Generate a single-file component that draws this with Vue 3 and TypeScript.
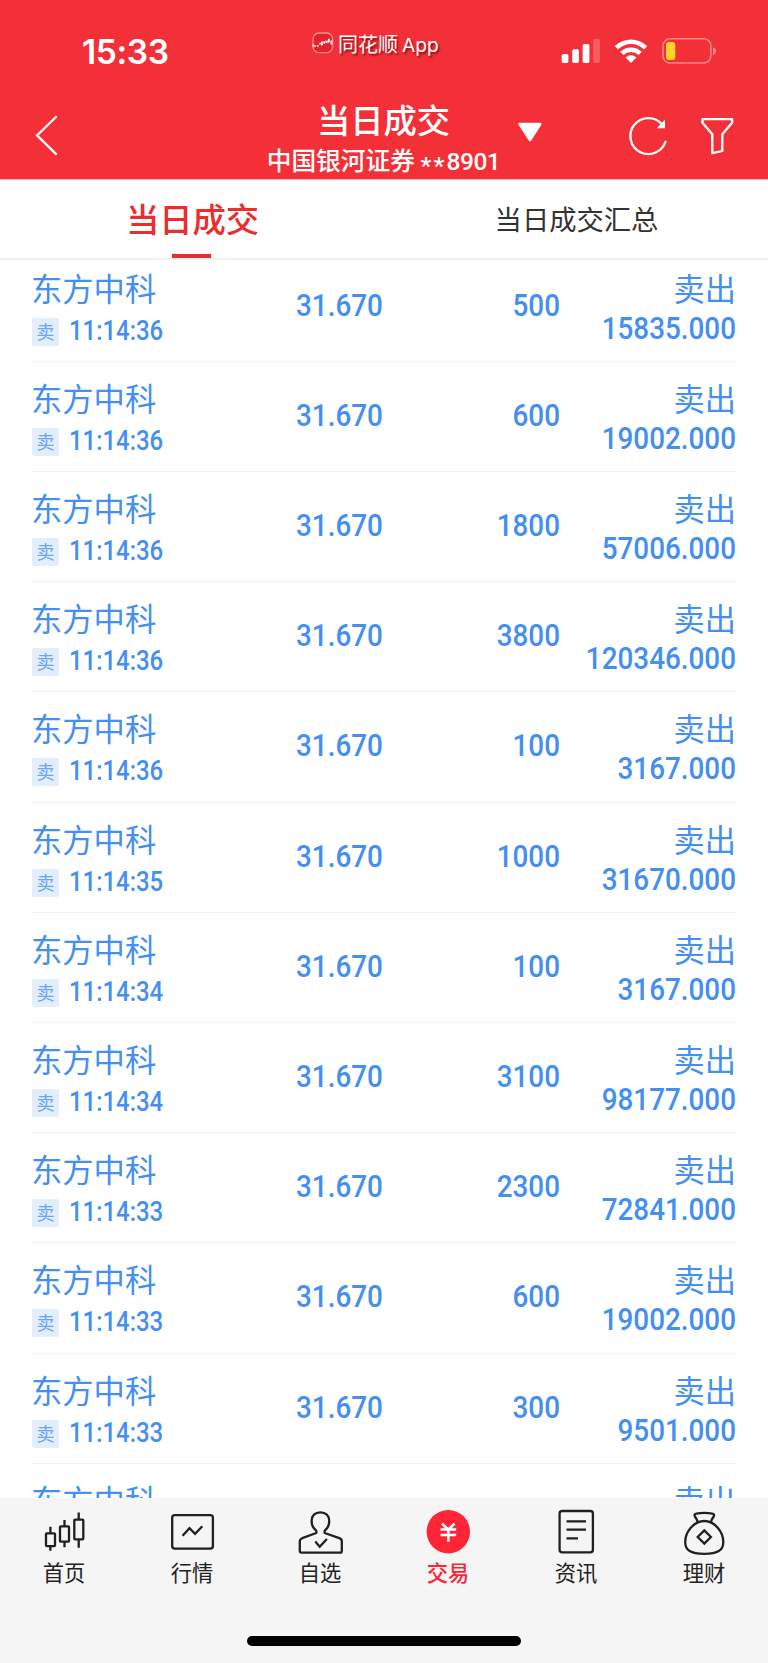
<script setup lang="ts">
interface Trade {
  time: string
  qty: string
  amount: string
}

const trades: Trade[] = [
  { time: '11:14:36', qty: '500', amount: '15835.000' },
  { time: '11:14:36', qty: '600', amount: '19002.000' },
  { time: '11:14:36', qty: '1800', amount: '57006.000' },
  { time: '11:14:36', qty: '3800', amount: '120346.000' },
  { time: '11:14:36', qty: '100', amount: '3167.000' },
  { time: '11:14:35', qty: '1000', amount: '31670.000' },
  { time: '11:14:34', qty: '100', amount: '3167.000' },
  { time: '11:14:34', qty: '3100', amount: '98177.000' },
  { time: '11:14:33', qty: '2300', amount: '72841.000' },
  { time: '11:14:33', qty: '600', amount: '19002.000' },
  { time: '11:14:33', qty: '300', amount: '9501.000' },
]
</script>

<template>
  <div class="screen">
    <header class="header">
      <div class="status">
        <span class="clock">15:33</span>
        <span class="brand">
          <svg width="22" height="22" viewBox="0 0 22 22">
            <rect x="1" y="1" width="19.6" height="19.6" rx="6" fill="#e3222b" stroke="#f98f92" stroke-width="1.3" />
            <path d="M1.3 12.200v2.200M2 14h1.800M5 14.300l1.500-.8M7.400 11.200l1.400.8M10 9.500v4M12.400 11.800V9M14.700 11V8.600M16.800 6.800v3.600M19.400 8.500v4" stroke="#fff" stroke-width="1.700" fill="none" />
          </svg>
          <span class="brand-text">同花顺<span class="brand-app">App</span></span>
        </span>
        <svg class="status-icons" width="160" height="30" viewBox="558 36 160 30">
          <g fill="#fff">
            <rect x="561.7" y="54" width="6.7" height="9" rx="1.8" />
            <rect x="572.2" y="49.3" width="6.7" height="13.7" rx="1.8" />
            <rect x="582.7" y="44" width="6.7" height="19" rx="1.8" />
            <rect x="593.2" y="39" width="6.7" height="24" rx="1.8" opacity=".22" />
            <path d="M614.8 46.1a23.4 23.4 0 0 1 32.4 0l-3.1 3.3a18.8 18.8 0 0 0-26.2 0z" />
            <path d="M620.2 51.8a15.6 15.6 0 0 1 21.6 0l-3.2 3.3a11 11 0 0 0-15.2 0z" />
            <path d="M625.6 57.4a7.8 7.8 0 0 1 10.800 0L631 63z" />
          </g>
          <rect x="663" y="38.8" width="47.8" height="24.2" rx="7" fill="none" stroke="#f88589" stroke-width="1.6" />
          <rect x="666" y="42" width="9.3" height="18" rx="3" fill="#ffd426" />
          <path d="M713 47.3c4 1.8 4 6 0 7.8z" fill="#f88589" />
        </svg>
      </div>
      <div class="nav">
        <svg class="back" width="24" height="42" viewBox="35 114 24 42">
          <path d="M56.7 116.3 37 135.4l19.700 19.200" fill="none" stroke="#fff" stroke-width="2.200" />
        </svg>
        <div class="titles">
          <h1>当日成交</h1>
          <p>中国银河证券 <span class="account"><span class="stars">**</span>8901</span></p>
        </div>
        <svg class="caret" width="26" height="22" viewBox="517 121 26 22">
          <path d="M519.500 124h20.800L530 140z" fill="#fff" stroke="#fff" stroke-width="2.600" stroke-linejoin="round" />
        </svg>
        <svg class="tools" width="108" height="42" viewBox="628 115 108 42">
          <g fill="none" stroke="#fff" stroke-width="2.300">
            <path d="M665.700 141a18 18 0 1 1-4.100-17.200" />
            <path d="M664.300 121.200v6.300h-5.900z" fill="#fff" stroke-width="1.400" />
            <path d="M702.500 119.200h29.600v3.600l-9.800 11.400v16.800l-10 2.200v-19l-9.800-11.400z" stroke-linejoin="round" />
          </g>
        </svg>
      </div>
    </header>

    <nav class="tabs">
      <div class="tab active"><span>当日成交</span></div>
      <div class="tab"><span>当日成交汇总</span></div>
    </nav>

    <main class="list">
      <div class="rows">
        <article v-for="(t, i) in trades" :key="i" class="row">
          <div class="stock">
            <span class="cn">东方中科</span>
            <div class="meta"><i class="tag">卖</i><span class="num time">{{ t.time }}</span></div>
          </div>
          <span class="num price">31.670</span>
          <span class="num qty">{{ t.qty }}</span>
          <div class="deal">
            <span class="cn">卖出</span>
            <span class="num amount">{{ t.amount }}</span>
          </div>
        </article>
        <article class="row partial">
          <div class="stock"><span class="cn">东方中科</span></div>
          <span></span>
          <span></span>
          <div class="deal"><span class="cn">卖出</span></div>
        </article>
      </div>
    </main>

    <footer class="footer">
      <div class="item">
        <svg viewBox="0 0 48 48">
          <rect x="6" y="25.400" width="9" height="12.700" rx=".8" /><path d="M10.400 18.700v6.700M10.400 38.100v4.700" />
          <rect x="20" y="18.400" width="9" height="15.300" rx=".8" /><path d="M24.500 12v6.400M24.500 33.700v5.500" />
          <rect x="34.300" y="11.700" width="9" height="19.700" rx=".8" /><path d="M38.700 4.600v7M38.700 31.400v8.400" />
        </svg>
        <span>首页</span>
      </div>
      <div class="item">
        <svg viewBox="0 0 48 48">
          <rect x="4.200" y="7.200" width="40.700" height="33.500" rx="2.600" />
          <path d="M14.600 27.700l6.900-7.500 5.600 5.600 7.200-7.600" />
        </svg>
        <span>行情</span>
      </div>
      <div class="item">
        <svg viewBox="0 0 48 48">
          <path d="M20.300 25v-2.400C16.800 20.200 15.600 17 15.600 13c0-5.400 3.400-8.700 8.800-8.700s8.800 3.300 8.800 8.700c0 4-1.200 7.200-4.500 9.600V25l14.600 5.200c1.700.6 2.500 1.300 2.500 3v9.700c0 1.100-.6 1.700-1.700 1.700H5.500c-1.100 0-1.700-.6-1.700-1.700v-9.700c0-1.700.7-2.300 2.400-3z" stroke-linejoin="round" />
          <path d="M19.300 33.600l4.400 5.200 7.200-7.800" />
        </svg>
        <span>自选</span>
      </div>
      <div class="item on">
        <svg viewBox="0 0 48 48">
          <circle cx="24.300" cy="23.700" r="21.700" class="disc" />
          <path d="M18 15.600l6.300 6.200 6.300-6.200M16.500 21.500h15.700M16.500 27h15.700M24.300 21.500v12.200" class="yen" />
        </svg>
        <span>交易</span>
      </div>
      <div class="item">
        <svg viewBox="0 0 48 48">
          <rect x="7.600" y="3" width="33.300" height="41.300" rx="2.600" />
          <path d="M14.500 13.300H34M14.500 21.700H34M14.500 30.300H26" />
        </svg>
        <span>资讯</span>
      </div>
      <div class="item">
        <svg viewBox="0 0 48 48">
          <path d="M17.700 14c-.6-2.300-1.500-3.700-2.800-5.500-.9-1.400-.3-2.700 1.300-2.900 5.400-.9 10.800-.9 16.200 0 1.600.2 2.200 1.500 1.300 2.900-1.300 1.800-2.200 3.200-2.800 5.500" />
          <path d="M24.300 13c10.500 0 19 11 19 21 0 8.500-5.400 11.800-19 11.800S5.200 42.500 5.200 34c0-10 8.500-21 19.100-21z" />
          <path d="M24.300 22.400l6.600 6.600-6.600 6.600-6.600-6.600z" />
        </svg>
        <span>理财</span>
      </div>
      <div class="home-bar"></div>
    </footer>
  </div>
</template>

<style>
body {
  margin: 0;
}
</style>

<style scoped>
.screen {
  width: 768px;
  height: 1663px;
  display: flex;
  flex-direction: column;
  overflow: hidden;
  background: #fff;
  font-family: "Noto Sans CJK SC", sans-serif;
}
.header {
  height: 180px;
  flex: none;
  background: #f33038;
  color: #fff;
  border-bottom: 1px solid #f9b4b6;
  box-sizing: border-box;
}
.status {
  height: 98px;
  display: grid;
  grid-template-columns: 312px 246px 1fr;
  align-items: start;
}
.clock {
  margin: 32px 0 0 82px;
  font: 600 33.5px/40px Inter, sans-serif;
  letter-spacing: -0.4px;
}
.brand {
  display: flex;
  align-items: center;
  gap: 4px;
  height: 28px;
  margin-top: 30px;
}
.brand svg {
  margin-bottom: 3px;
}
.brand-text {
  font-size: 20px;
  line-height: 28px;
  text-shadow: 1.5px 1.5px 2px rgba(80, 0, 0, 0.65);
  white-space: nowrap;
}
.brand-app {
  font-family: Inter, sans-serif;
  font-size: 19.3px;
  margin-left: 4px;
}
.status-icons {
  margin-top: 36px;
}
.nav {
  height: 80px;
  display: grid;
  grid-template-columns: 35px 225px 257px 111px 1fr;
  align-items: start;
}
.back {
  grid-column: 2;
  margin-top: 16px;
}
.titles {
  text-align: center;
  white-space: nowrap;
  margin: -1px 10px 0 0;
}
h1 {
  margin: 0;
  font-size: 33.3px;
  line-height: 44px;
  font-weight: 500;
}
p {
  margin: 0;
  font-size: 24.7px;
  line-height: 36px;
  font-weight: 500;
}
.account {
  font-family: Roboto, sans-serif;
  font-size: 24.5px;
  font-weight: 500;
  letter-spacing: -0.5px;
}
.stars {
  display: inline-block;
  line-height: 20px;
  letter-spacing: 2.2px;
  transform: translateY(4px);
}
.caret {
  margin-top: 23px;
}
.tools {
  margin-top: 17px;
}
.tabs {
  height: 78px;
  flex: none;
  display: grid;
  grid-template-columns: 1fr 1fr;
  border-bottom: 2px solid #f0f0f0;
  color: #333;
}
.tab {
  display: flex;
  justify-content: center;
  font-size: 27.3px;
  line-height: 76px;
}
.tab span {
  margin-left: 1px;
}
.active {
  position: relative;
  color: #eb2d2e;
  font-size: 33.3px;
  font-weight: 500;
}
.active::after {
  content: "";
  position: absolute;
  left: 172px;
  bottom: 0;
  width: 39px;
  height: 4px;
  background: #eb2d2e;
}
.list {
  flex: 1;
  min-height: 0;
  overflow: hidden;
}
.rows {
  margin: -8.5px 32px 0;
  color: #448ff0;
}
.row {
  height: 110.23px;
  box-sizing: border-box;
  border-bottom: 1.5px solid #f3f3f3;
  display: grid;
  grid-template-columns: 264px 120px 144px 1fr;
  align-items: start;
}
.cn {
  display: block;
  font-size: 31.3px;
  line-height: 40px;
}
.stock {
  padding-top: 16px;
}
.stock .cn {
  margin-left: -1px;
}
.meta {
  display: flex;
  align-items: center;
  margin-top: 10px;
  height: 28px;
}
.tag {
  width: 27px;
  height: 28px;
  border-radius: 2px;
  background: #e2eefc;
  color: #6ba6f3;
  font-style: normal;
  font-size: 18px;
  line-height: 27px;
  text-align: center;
}
.num {
  font-family: Roboto, sans-serif;
  font-weight: 500;
  font-size: 32px;
  line-height: 40px;
  white-space: nowrap;
  transform: scaleX(0.87);
  transform-origin: left;
}
.time {
  font-size: 27.5px;
  margin: -2px 0 0 10px;
}
.price {
  margin-top: 33px;
}
.qty {
  margin-top: 33px;
  text-align: right;
  transform-origin: right;
}
.deal {
  padding-top: 16px;
  text-align: right;
}
.amount {
  display: block;
  transform-origin: right;
}
.footer {
  height: 165px;
  flex: none;
  box-sizing: border-box;
  padding-top: 10px;
  background: #f5f5f5;
  display: grid;
  grid-template-columns: repeat(6, 128px);
  grid-template-rows: 130px 10px;
  color: #222;
}
.item {
  display: flex;
  flex-direction: column;
  align-items: center;
  font-size: 21.3px;
  line-height: 32px;
}
.item svg {
  width: 48px;
  height: 48px;
  fill: none;
  stroke: #202020;
  stroke-width: 2.3;
}
.on {
  color: #ff2436;
  font-weight: 500;
}
.item .disc {
  fill: #ff2436;
  stroke: none;
}
.item .yen {
  stroke: #fff;
  stroke-width: 2.6;
}
.home-bar {
  grid-column: 1 / -1;
  justify-self: center;
  margin-top: -2px;
  width: 274px;
  height: 10px;
  border-radius: 5px;
  background: #000;
}
</style>
